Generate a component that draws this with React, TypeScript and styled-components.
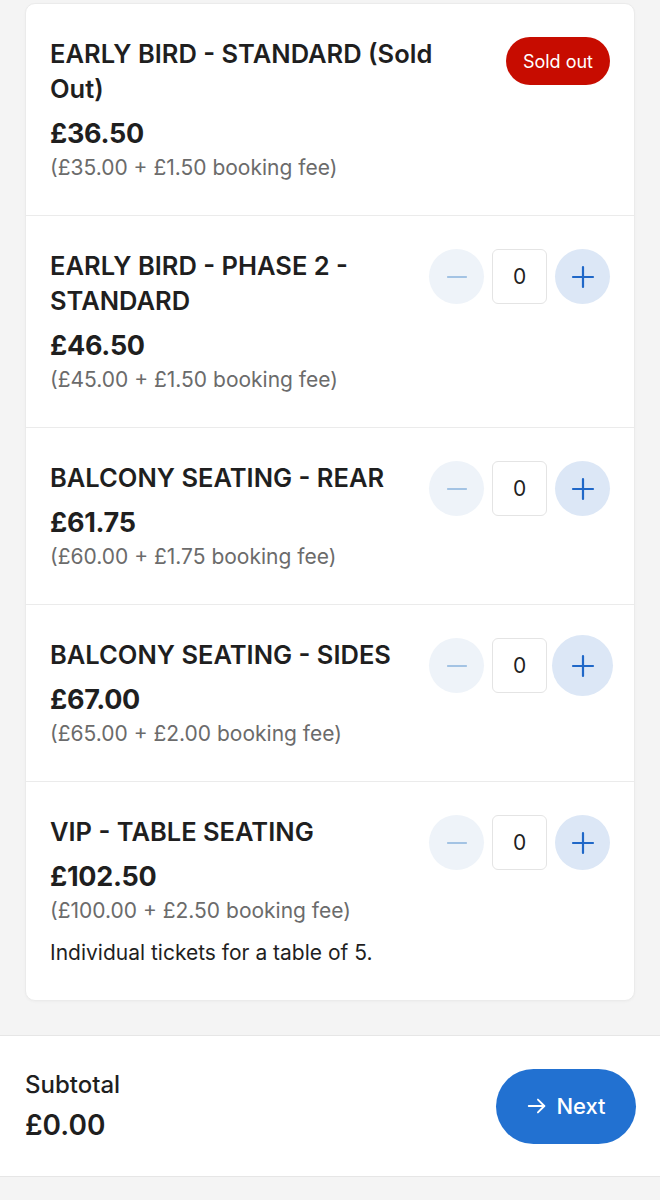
import { createGlobalStyle, styled } from "styled-components";

const GlobalStyle = createGlobalStyle`
    html, body {
        margin: 0;
        padding: 0;
        background: #f4f4f4;
        font-family: Inter, "Noto Sans", "Liberation Sans", sans-serif;
        color: #1f1f1f;
        -webkit-font-smoothing: antialiased;
    }
`;

interface Ticket {
    name: string;
    price: string;
    breakdown: string;
    soldOut?: boolean;
    note?: string;
    focused?: boolean;
}

const tickets: Ticket[] = [
    { name: "EARLY BIRD - STANDARD (Sold Out)", price: "£36.50", breakdown: "(£35.00 + £1.50 booking fee)", soldOut: true },
    { name: "EARLY BIRD - PHASE 2 - STANDARD", price: "£46.50", breakdown: "(£45.00 + £1.50 booking fee)" },
    { name: "BALCONY SEATING - REAR", price: "£61.75", breakdown: "(£60.00 + £1.75 booking fee)" },
    { name: "BALCONY SEATING - SIDES", price: "£67.00", breakdown: "(£65.00 + £2.00 booking fee)", focused: true },
    { name: "VIP - TABLE SEATING", price: "£102.50", breakdown: "(£100.00 + £2.50 booking fee)", note: "Individual tickets for a table of 5." },
];

const Page = styled.div`
    display: flex;
    flex-direction: column;
    min-height: 1200px;
    padding-top: 3px;
    box-sizing: border-box;
`;

const Card = styled.div`
    margin: 0 25px;
    background: #fff;
    border: 1px solid #ebebeb;
    border-radius: 10px;
    box-shadow: 0 1px 3px rgba(0, 0, 0, 0.03);
    overflow: hidden;
`;

const Row = styled.div`
    display: flex;
    align-items: flex-start;
    gap: 18px;
    padding: 32px 24px 33px 24px;
    & + & {
        border-top: 1px solid #ebebeb;
    }
`;

const Info = styled.div`
    flex: 1;
    min-width: 0;
    display: flex;
    flex-direction: column;
`;

const Title = styled.div`
    font-size: 25.5px;
    line-height: 35px;
    font-weight: 600;
    color: #1f1f1f;
`;

const Price = styled.div`
    margin-top: 10px;
    font-size: 27px;
    line-height: 36px;
    font-weight: 700;
    letter-spacing: -0.3px;
    color: #1f1f1f;
`;

const Breakdown = styled.div`
    margin-top: 2px;
    font-size: 21px;
    line-height: 28px;
    color: #6b6b6b;
`;

const Note = styled.div`
    margin-top: 14px;
    font-size: 21px;
    line-height: 28px;
    color: #1f1f1f;
`;

const SoldOut = styled.div`
    margin-top: 1px;
    margin-left: 6px;
    height: 48px;
    padding: 0 17px;
    border-radius: 24px;
    background: #c70c00;
    color: #fff;
    font-size: 18px;
    display: flex;
    align-items: center;
    white-space: nowrap;
`;

const Stepper = styled.div`
    margin-top: 1px;
    display: flex;
    align-items: center;
    gap: 8px;
    height: 55px;
`;

const RoundButton = styled.button<{ $tone: "muted" | "active"; $focused?: boolean }>`
    width: ${p => (p.$focused ? 61 : 55)}px;
    height: ${p => (p.$focused ? 61 : 55)}px;
    margin: ${p => (p.$focused ? "0 -3px" : "0")};
    border-radius: 50%;
    border: none;
    padding: 0;
    display: flex;
    align-items: center;
    justify-content: center;
    background: ${p => (p.$tone === "active" ? "#dce7f6" : "#eef3f9")};
    color: ${p => (p.$tone === "active" ? "#2068c8" : "#a3c3e4")};
    flex-shrink: 0;
`;

const Qty = styled.div`
    width: 55px;
    height: 55px;
    box-sizing: border-box;
    border: 1px solid #e4e4e4;
    border-radius: 6px;
    display: flex;
    align-items: center;
    justify-content: center;
    font-size: 21px;
    color: #1f1f1f;
    background: #fff;
`;

const Footer = styled.div`
    margin-top: 34px;
    background: #fff;
    border-top: 1px solid #e6e6e6;
    border-bottom: 1px solid #e6e6e6;
    height: 142px;
    box-sizing: border-box;
    padding: 0 24px 0 25px;
    display: flex;
    align-items: center;
    justify-content: space-between;
`;

const Totals = styled.div`
    display: flex;
    flex-direction: column;
`;

const SubtotalLabel = styled.div`
    font-size: 24px;
    line-height: 32px;
    font-weight: 500;
    color: #1f1f1f;
`;

const SubtotalValue = styled.div`
    margin-top: 6px;
    font-size: 28px;
    line-height: 36px;
    font-weight: 600;
    color: #1f1f1f;
`;

const NextButton = styled.button`
    height: 75px;
    width: 140px;
    border-radius: 38px;
    border: none;
    background: #2271d1;
    color: #fff;
    font-family: inherit;
    font-size: 22px;
    font-weight: 500;
    display: flex;
    align-items: center;
    justify-content: center;
    gap: 8px;
`;

function Minus() {
    return <svg width="22" height="22" viewBox="0 0 24 24" fill="none" stroke="currentColor" strokeWidth="2" strokeLinecap="round">
        <path d="M2 12h20" />
    </svg>;
}

function Plus() {
    return <svg width="24" height="24" viewBox="0 0 24 24" fill="none" stroke="currentColor" strokeWidth="2.2" strokeLinecap="round">
        <path d="M2 12h20M12 2v20" />
    </svg>;
}

function Arrow() {
    return <svg width="22" height="22" viewBox="0 0 24 24" fill="none" stroke="currentColor" strokeWidth="2" strokeLinecap="round" strokeLinejoin="round">
        <path d="M3 12h17" />
        <path d="m13 5 7 7-7 7" />
    </svg>;
}

export default function App() {
    return <>
        <GlobalStyle />
        <Page>
            <Card>
                {tickets.map(t => <Row key={t.name}>
                    <Info>
                        <Title>{t.name}</Title>
                        <Price>{t.price}</Price>
                        <Breakdown>{t.breakdown}</Breakdown>
                        {t.note && <Note>{t.note}</Note>}
                    </Info>
                    {t.soldOut ? <SoldOut>Sold out</SoldOut> : <Stepper>
                        <RoundButton $tone="muted"><Minus /></RoundButton>
                        <Qty>0</Qty>
                        <RoundButton $tone="active" $focused={t.focused}><Plus /></RoundButton>
                    </Stepper>}
                </Row>)}
            </Card>
            <Footer>
                <Totals>
                    <SubtotalLabel>Subtotal</SubtotalLabel>
                    <SubtotalValue>£0.00</SubtotalValue>
                </Totals>
                <NextButton><Arrow />Next</NextButton>
            </Footer>
        </Page>
    </>;
}
